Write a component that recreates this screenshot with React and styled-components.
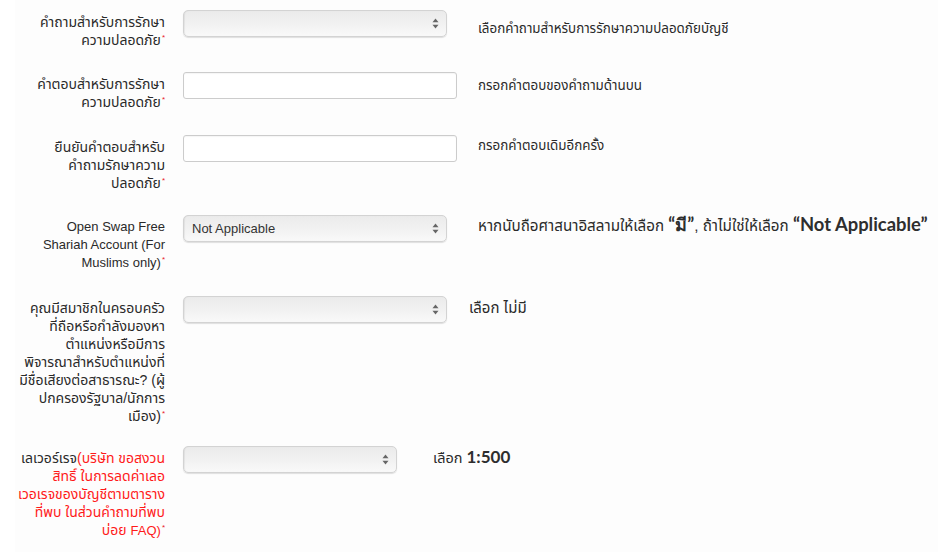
import React from 'react'
import styled, { createGlobalStyle } from 'styled-components'

const GlobalStyle = createGlobalStyle`
  html, body {
    margin: 0;
    padding: 0;
    background: #ffffff;
  }
  body {
    font-family: "Liberation Sans", "Noto Sans Thai", "Noto Sans", sans-serif;
    color: #333333;
  }
`

const Page = styled.div`
  margin-left: 15px;
  padding: 10px 0 8px;
  min-height: 534px;
  background: #fdfdfd;
`

const Row = styled.div`
  display: flex;
  align-items: flex-start;
  padding-bottom: ${({ $gap }) => $gap}px;
`

const Label = styled.div`
  width: 150px;
  flex-shrink: 0;
  padding-top: 3px;
  text-align: right;
  font-size: ${({ $size }) => $size || 14}px;
  line-height: 18px;
  color: #2a2a2a;
  white-space: nowrap;
`

const Line = styled.div``

const Latin = styled.span`
  font-size: 13px;
`

const Red = styled.span`
  color: #ff1a1a;
`

const Req = styled.sup`
  color: #e8202a;
  font-size: 8px;
  line-height: 0;
  vertical-align: 5px;
  margin-left: 1px;
`

const Control = styled.div`
  margin-left: 18px;
  width: ${({ $w }) => $w}px;
  flex-shrink: 0;
`

const SelectBox = styled.div`
  box-sizing: border-box;
  height: 27px;
  display: flex;
  align-items: center;
  justify-content: space-between;
  padding: 0 7px 0 8px;
  border: 1px solid #d3d3d3;
  border-radius: 5px;
  background: linear-gradient(180deg, #ebebeb 0%, #f1f1f1 50%, #f9f9f9 100%);
  box-shadow: 0 1px 1px rgba(0, 0, 0, 0.12), inset 1px 0 1px rgba(0, 0, 0, 0.06);
  font-family: "Liberation Sans", sans-serif;
  font-size: 13px;
  color: #333333;
`

const TextInput = styled.input`
  box-sizing: border-box;
  display: block;
  width: 100%;
  height: 27px;
  margin: 0;
  border: 1px solid #cccccc;
  border-radius: 3px;
  background: #ffffff;
  box-shadow: inset 0 1px 1px rgba(0, 0, 0, 0.04);
  outline: none;
`

const Help = styled.div`
  margin-left: ${({ $ml }) => $ml}px;
  padding-top: ${({ $pt }) => $pt}px;
  font-size: ${({ $size }) => $size || 13.4}px;
  line-height: 18px;
  color: #2a2a2a;
  white-space: nowrap;
`

const Strong = styled.b`
  font-family: Lato, "Open Sans", sans-serif;
  font-weight: 700;
  font-size: ${({ $size }) => $size}px;
  color: #2e2e2e;
`

const Arrows = () => (
  <svg width="7" height="11" viewBox="0 0 7 11">
    <path d="M3.5 0.5 L6.5 4.3 L0.5 4.3 Z" fill="#666" />
    <path d="M3.5 10.5 L6.5 6.7 L0.5 6.7 Z" fill="#666" />
  </svg>
)

const Select = ({ value }) => (
  <SelectBox>
    <span>{value}</span>
    <Arrows />
  </SelectBox>
)

const FieldLabel = ({ lines, size }) => (
  <Label $size={size}>
    {lines.map((l, i) => (
      <Line key={i}>
        {l}
        {i === lines.length - 1 && <Req>*</Req>}
      </Line>
    ))}
  </Label>
)

const App = () => {
  return (
    <>
      <GlobalStyle />
      <Page>
        <Row $gap={23}>
          <FieldLabel lines={['คำถามสำหรับการรักษา', 'ความปลอดภัย']} />
          <Control $w={264}>
            <Select value="" />
          </Control>
          <Help $ml={31} $pt={10}>เลือกคำถามสำหรับการรักษาความปลอดภัยบัญชี</Help>
        </Row>

        <Row $gap={24}>
          <FieldLabel lines={['คำตอบสำหรับการรักษา', 'ความปลอดภัย']} />
          <Control $w={274}>
            <TextInput type="text" />
          </Control>
          <Help $ml={21} $pt={5}>กรอกคำตอบของคำถามด้านบน</Help>
        </Row>

        <Row $gap={23}>
          <FieldLabel lines={['ยืนยันคำตอบสำหรับ', 'คำถามรักษาความ', 'ปลอดภัย']} />
          <Control $w={274}>
            <TextInput type="text" />
          </Control>
          <Help $ml={21} $pt={2}>กรอกคำตอบเดิมอีกครั้ง</Help>
        </Row>

        <Row $gap={24}>
          <FieldLabel size={13} lines={['Open Swap Free', 'Shariah Account (For', 'Muslims only)']} />
          <Control $w={264}>
            <Select value="Not Applicable" />
          </Control>
          <Help $ml={31} $pt={0} $size={15.2}>
            หากนับถือศาสนาอิสลามให้เลือก <Strong $size={18}>“มี”</Strong>, ถ้าไม่ใช่ให้เลือก{' '}
            <Strong $size={18.4}>“Not Applicable”</Strong>
          </Help>
        </Row>

        <Row $gap={21}>
          <FieldLabel
            lines={[
              'คุณมีสมาชิกในครอบครัว',
              'ที่ถือหรือกำลังมองหา',
              'ตำแหน่งหรือมีการ',
              'พิจารณาสำหรับตำแหน่งที่',
              'มีชื่อเสียงต่อสาธารณะ? (ผู้',
              'ปกครองรัฐบาล/นักการ',
              'เมือง)',
            ]}
          />
          <Control $w={264}>
            <Select value="" />
          </Control>
          <Help $ml={22} $pt={3} $size={15}>เลือก ไม่มี</Help>
        </Row>

        <Row $gap={0}>
          <FieldLabel
            lines={[
              <>
                เลเวอร์เรจ<Red>(บริษัท ขอสงวน</Red>
              </>,
              <Red>สิทธิ์ ในการลดค่าเลอ</Red>,
              <Red>เวอเรจของบัญชีตามตาราง</Red>,
              <Red>ที่พบ ในส่วนคำถามที่พบ</Red>,
              <Red>
                บ่อย <Latin>FAQ)</Latin>
              </Red>,
            ]}
          />
          <Control $w={214}>
            <Select value="" />
          </Control>
          <Help $ml={36} $pt={2} $size={14.5}>
            เลือก <Strong $size={17}>1:500</Strong>
          </Help>
        </Row>
      </Page>
    </>
  )
}

export default App
